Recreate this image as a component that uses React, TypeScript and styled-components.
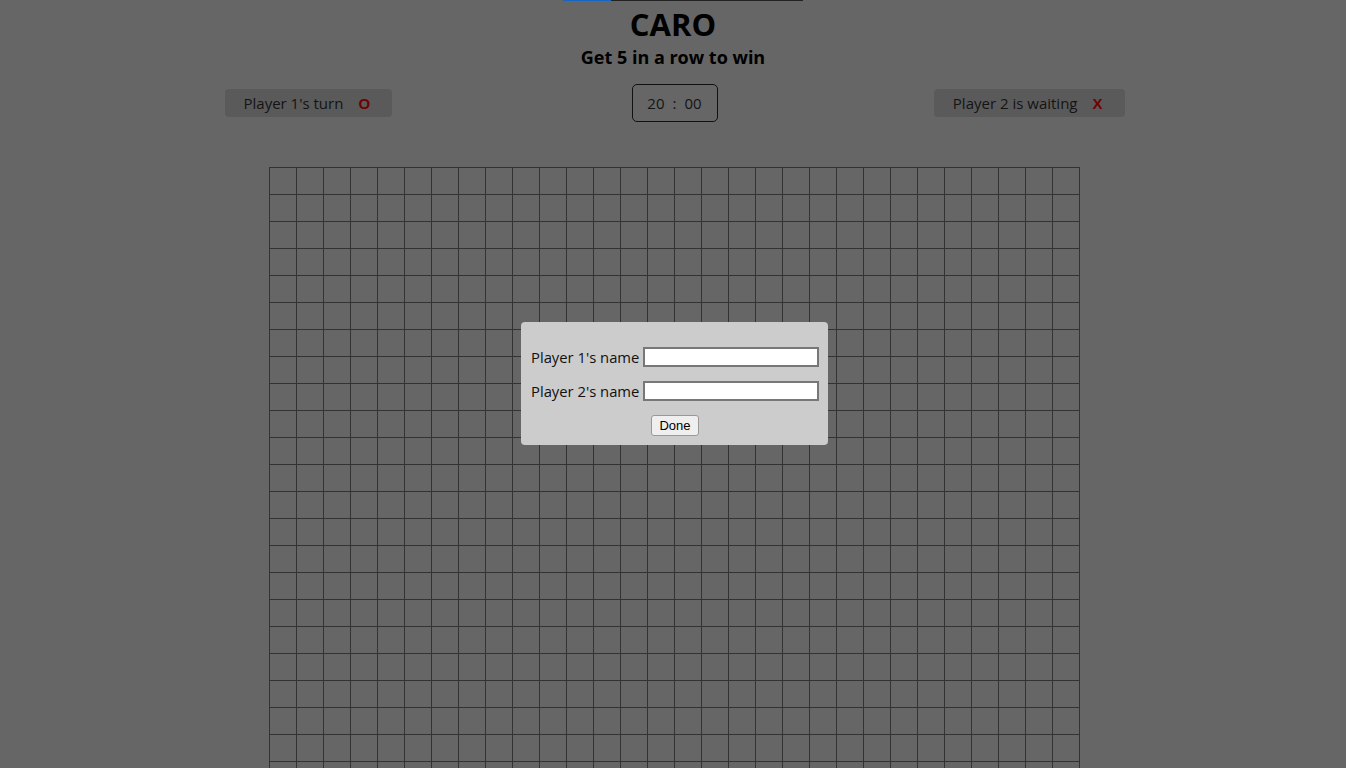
import React from "react";
import styled, { createGlobalStyle } from "styled-components";

const Global = createGlobalStyle`
  html, body { margin: 0; padding: 0; background: #666666; }
  body { font-family: "Open Sans", "Noto Sans", sans-serif; color: #111; overflow: hidden; }
`;

const Page = styled.div`
  display: flex;
  flex-direction: column;
  align-items: center;
  width: 1346px;
  height: 768px;
  overflow: hidden;
`;

const TopBar = styled.div`
  align-self: flex-start;
  margin-left: 563px;
  width: 240px;
  height: 1px;
  background: #222;
  display: flex;
`;

const TopBarFill = styled.div`
  height: 1px;
  background: #1766c4;
`;

const Title = styled.h1`
  margin: 4px 0 0;
  font-size: 31px;
  line-height: 38px;
  font-weight: 700;
  color: #000;
`;

const Subtitle = styled.h2`
  margin: 2px 0 0;
  font-size: 18px;
  line-height: 24px;
  font-weight: 700;
  color: #000;
`;

const StatusRow = styled.div`
  display: grid;
  grid-template-columns: 1fr auto 1fr;
  align-items: center;
  width: 900px;
  margin-top: 15px;
  margin-left: 3px;
`;

const Pill = styled.div<{ $align: "start" | "end" }>`
  justify-self: ${(p) => p.$align};
  display: flex;
  align-items: center;
  gap: 15px;
  height: 28px;
  padding: 0 22px 0 19px;
  background: #5a5a5a;
  border-radius: 4px;
  font-size: 15px;
  color: #141414;
`;

const Mark = styled.span`
  color: #6e0202;
  font-weight: 700;
  font-family: "Liberation Sans", Arial, sans-serif;
  font-size: 15px;
`;

const Timer = styled.div`
  display: flex;
  align-items: center;
  justify-content: center;
  gap: 8px;
  width: 84px;
  height: 36px;
  border: 1px solid #111;
  border-radius: 5px;
  font-size: 15px;
  color: #141414;
`;

const Board = styled.div`
  margin-top: 45px;
  margin-left: 3px;
  display: grid;
  grid-template-columns: repeat(30, 27px);
  grid-auto-rows: 27px;
  border-top: 1px solid #333;
  border-left: 1px solid #333;
  flex-shrink: 0;
`;

const Cell = styled.div`
  box-sizing: border-box;
  border-right: 1px solid #333;
  border-bottom: 1px solid #333;
`;

const Dialog = styled.form`
  position: absolute;
  left: 521px;
  top: 322px;
  width: 307px;
  height: 123px;
  box-sizing: border-box;
  background: #cccccc;
  border-radius: 4px;
  padding: 25px 9px 0 10px;
  display: flex;
  flex-direction: column;
  gap: 15px;
`;

const Field = styled.label`
  display: flex;
  align-items: center;
  justify-content: space-between;
  height: 19px;
  font-size: 14.8px;
  color: #111;
`;

const Input = styled.input`
  box-sizing: border-box;
  width: 176px;
  height: 20px;
  border: 2px solid #777;
  background: #fff;
  padding: 0 2px;
  margin: 0;
`;

const Done = styled.button`
  align-self: center;
  margin-top: 0;
  height: 21px;
  padding: 0 7px;
  font-family: "Liberation Sans", Arial, sans-serif;
  font-size: 13px;
  color: #000;
  background: #efefef;
  border: 1px solid #999;
  border-radius: 3px;
`;

export default function App() {
  const cells = Array.from({ length: 900 });
  return (
    <>
      <Global />
      <Page>
        <TopBar>
          <TopBarFill style={{ width: "48px" }} />
        </TopBar>
        <Title>CARO</Title>
        <Subtitle>Get 5 in a row to win</Subtitle>
        <StatusRow>
          <Pill $align="start">
            <span>Player 1's turn</span>
            <Mark>O</Mark>
          </Pill>
          <Timer>
            <span>20</span>
            <span>:</span>
            <span>00</span>
          </Timer>
          <Pill $align="end">
            <span>Player 2 is waiting</span>
            <Mark>X</Mark>
          </Pill>
        </StatusRow>
        <Board>
          {cells.map((_, i) => (
            <Cell key={i} />
          ))}
        </Board>
      </Page>
      <Dialog onSubmit={(e) => e.preventDefault()}>
        <Field>
          Player 1's name
          <Input type="text" />
        </Field>
        <Field>
          Player 2's name
          <Input type="text" />
        </Field>
        <Done type="submit">Done</Done>
      </Dialog>
    </>
  );
}
